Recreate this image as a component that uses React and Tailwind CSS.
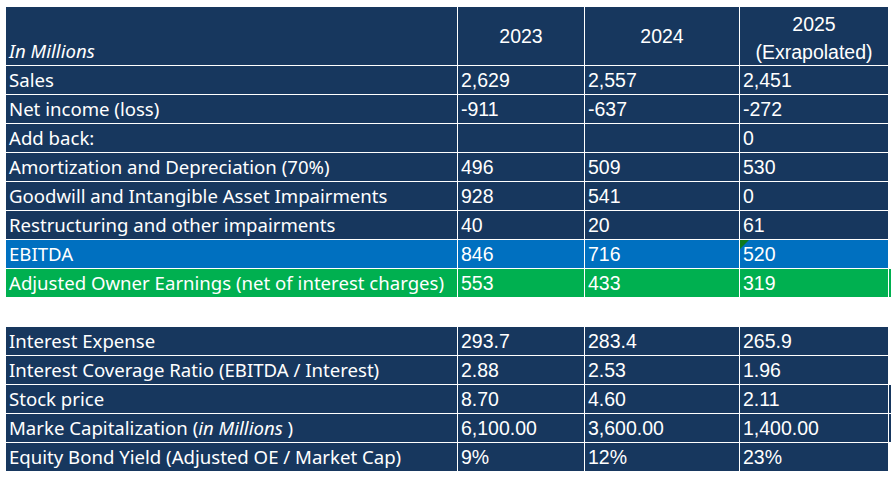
import React from "react";

const label = "font-['Noto_Sans',sans-serif] text-[18.6px] leading-[28px]";
const num = "font-['Liberation_Sans',Arial,sans-serif] text-[19.5px] leading-[28px]";

const topRows = [
  { name: "Sales", vals: ["2,629", "2,557", "2,451"] },
  { name: "Net income (loss)", vals: ["-911", "-637", "-272"] },
  { name: "Add back:", vals: ["", "", "0"] },
  { name: "Amortization and Depreciation (70%)", vals: ["496", "509", "530"] },
  { name: "Goodwill and Intangible Asset Impairments", vals: ["928", "541", "0"] },
  { name: "Restructuring and other impairments", vals: ["40", "20", "61"] },
  { name: "EBITDA", vals: ["846", "716", "520"], bg: "bg-[#0070C0]", flag: true },
  {
    name: "Adjusted Owner Earnings (net of interest charges)",
    vals: ["553", "433", "319"],
    bg: "bg-[#00B050]",
    strip: true,
  },
];

const bottomRows = [
  { name: "Interest Expense", vals: ["293.7", "283.4", "265.9"] },
  { name: "Interest Coverage Ratio (EBITDA / Interest)", vals: ["2.88", "2.53", "1.96"] },
  { name: "Stock price", vals: ["8.70", "4.60", "2.11"], strip: true },
  {
    name: (
      <>
        Marke Capitalization (<span className="italic">in Millions</span> )
      </>
    ),
    vals: ["6,100.00", "3,600.00", "1,400.00"],
    strip: true,
  },
  { name: "Equity Bond Yield (Adjusted OE / Market Cap)", vals: ["9%", "12%", "23%"] },
];

function Row({ row }) {
  const bg = row.bg || "bg-[#17375E]";
  return (
    <>
      <div className={`${bg} ${label} h-[28px] pl-[3px] whitespace-nowrap`}>{row.name}</div>
      {row.vals.map((v, i) => (
        <div key={i} className={`${bg} ${num} relative h-[28px] pl-[3px]`}>
          {row.flag && i === 2 && (
            <svg className="absolute left-0 top-0" width="9" height="9" viewBox="0 0 9 9">
              <polygon points="0,0 9,0 0,9" fill="#0E7A1E" />
            </svg>
          )}
          {v}
        </div>
      ))}
      <div className={row.strip ? bg : ""} />
    </>
  );
}

export default function App() {
  const cols = "grid grid-cols-[451px_126px_154px_148px_2px] gap-px";
  return (
    <div className="bg-white w-[891px] h-[478px] pl-[6px] pt-[7px] text-white">
      <div className={cols}>
        <div className="bg-[#17375E] h-[58px] flex flex-col justify-end pl-[3px]">
          <span className={`${label} italic`}>In Millions</span>
        </div>
        <div className={`bg-[#17375E] h-[58px] flex items-center justify-center ${num}`}>2023</div>
        <div className={`bg-[#17375E] h-[58px] flex items-center justify-center ${num}`}>2024</div>
        <div className={`bg-[#17375E] h-[58px] flex flex-col items-center pt-[3px] ${num}`}>
          <span>2025</span>
          <span>(Exrapolated)</span>
        </div>
        <div />
        {topRows.map((r, i) => (
          <Row key={i} row={r} />
        ))}
      </div>

      <div className={`${cols} mt-[30px]`}>
        {bottomRows.map((r, i) => (
          <Row key={i} row={r} />
        ))}
      </div>
    </div>
  );
}
